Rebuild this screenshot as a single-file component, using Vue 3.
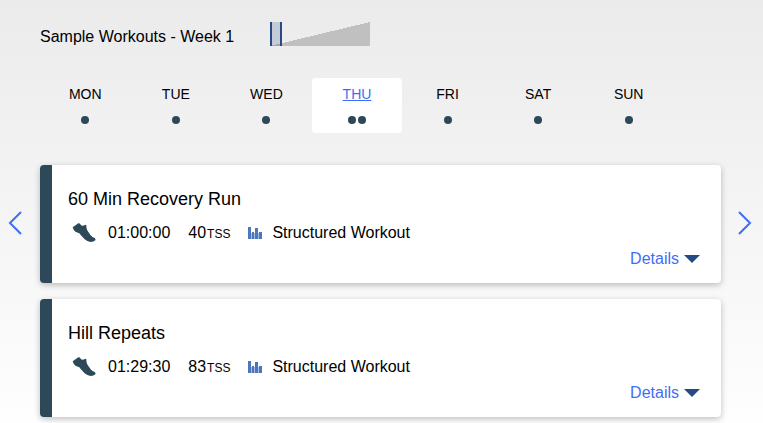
<script setup>
import { ref } from 'vue'

const week = ref(0)
const active = ref('THU')
const days = [
  { name: 'MON', count: 1 },
  { name: 'TUE', count: 1 },
  { name: 'WED', count: 1 },
  { name: 'THU', count: 2 },
  { name: 'FRI', count: 1 },
  { name: 'SAT', count: 1 },
  { name: 'SUN', count: 1 },
]
const workouts = [
  { title: '60 Min Recovery Run', time: '01:00:00', tss: 40 },
  { title: 'Hill Repeats', time: '01:29:30', tss: 83 },
]
</script>

<template>
  <main class="page">
    <header class="header">
      <label class="heading" for="week">Sample Workouts - Week 1</label>
      <input id="week" v-model="week" class="ramp" type="range" min="0" max="11" />
    </header>

    <nav class="days">
      <button
        v-for="day in days"
        :key="day.name"
        type="button"
        class="day"
        :class="{ active: day.name === active }"
        @click="active = day.name"
      >
        <span class="day-name">{{ day.name }}</span>
        <span class="dots"><i v-for="n in day.count" :key="n" class="dot"></i></span>
      </button>
    </nav>

    <button type="button" class="arrow" aria-label="Previous day">
      <svg width="16" height="26" viewBox="0 0 16 26"><path d="M13 2 2 13l11 11" /></svg>
    </button>

    <section class="cards">
      <article v-for="w in workouts" :key="w.title" class="card">
        <h2 class="title">{{ w.title }}</h2>
        <div class="stats">
          <svg class="shoe" width="24" height="20" viewBox="0 0 72 60">
            <path d="M2 13 L19 1 Q23 0 25 4 Q27 9 33 8 L41 5 Q44 6 43 10 Q43 18 47 24 L56 37 Q61 43 68 45 Q72 48 70 52 Q65 57 56 57 Q45 56 38 49 L26 36 Q24 30 18 29 Q9 27 5 20 Z" />
          </svg>
          <span class="time">{{ w.time }}</span>
          <span class="tss">{{ w.tss }}<small>TSS</small></span>
          <svg class="bars" width="14" height="12" viewBox="0 0 14 12">
            <path class="bars-back" d="M3 6h8v6H3z" />
            <path d="M0 0h3v12H0zM4 5h2v7H4zM7 1h3v11H7zM11 5h3v7h-3z" />
          </svg>
          <span>Structured Workout</span>
        </div>
        <button type="button" class="details">
          Details
          <svg width="16" height="8" viewBox="0 0 16 8"><path d="M0 0h16L8 8z" /></svg>
        </button>
      </article>
    </section>

    <button type="button" class="arrow" aria-label="Next day">
      <svg width="16" height="26" viewBox="0 0 16 26"><path d="M2 2l11 11L2 24" /></svg>
    </button>
  </main>
</template>

<style>
body {
  margin: 0;
  background: #fff;
}
</style>

<style scoped>
.page {
  display: grid;
  grid-template-columns: 40px 1fr 42px;
  padding: 22px 0 6px;
  background: linear-gradient(#ebebeb, #fefefe);
  font-family: "Liberation Sans", Arial, sans-serif;
  font-size: 16px;
  line-height: 20px;
  color: #000;
}
button {
  padding: 0;
  border: 0;
  background: none;
  font: inherit;
  color: inherit;
  cursor: pointer;
}
.header {
  grid-column: 2;
  display: flex;
  align-items: center;
  gap: 36px;
  height: 24px;
}
.heading {
  padding-top: 6px;
}
.ramp {
  appearance: none;
  width: 100px;
  height: 24px;
  margin: 0;
  background: linear-gradient(to bottom right, transparent 50%, #c0c0c0 50%);
}
.ramp::-webkit-slider-thumb {
  appearance: none;
  box-sizing: border-box;
  width: 12px;
  height: 24px;
  border: solid #264a86;
  border-width: 0 2px;
  background: rgba(38, 74, 134, 0.2);
}
.days {
  grid-column: 2;
  display: grid;
  grid-template-columns: repeat(7, 1fr);
  margin: 32px 47px 32px 0;
}
.day {
  display: flex;
  flex-direction: column;
  align-items: center;
  gap: 12px;
  height: 55px;
  padding-top: 6px;
  border-radius: 4px;
  font-size: 14px;
}
.active {
  background: #fff;
}
.active .day-name {
  color: #3f6ef6;
  text-decoration: underline;
}
.dots {
  display: flex;
  gap: 2px;
}
.dot {
  width: 8px;
  height: 8px;
  border-radius: 50%;
  background: #2d4858;
}
.arrow {
  grid-column: 1;
  align-self: start;
  margin-top: 45px;
  height: 26px;
}
.cards + .arrow {
  grid-column: 3;
  padding-left: 8px;
}
.arrow svg {
  display: block;
  margin-left: 8px;
  fill: none;
  stroke: #3f6ef6;
  stroke-width: 2;
}
.cards {
  display: grid;
  gap: 16px;
}
.card {
  display: flex;
  flex-direction: column;
  height: 118px;
  box-sizing: border-box;
  padding: 24px 21px 14px 16px;
  border-left: 12px solid #2d4858;
  border-radius: 4px;
  background: #fff;
  box-shadow: 0 2px 6px rgba(0, 0, 0, 0.25);
}
.title {
  margin: 0 0 14px;
  font-size: 18px;
  font-weight: 400;
}
.stats {
  display: flex;
  align-items: center;
  height: 20px;
}
.shoe {
  margin: 0 12px 0 4px;
  fill: #2d4858;
}
.time {
  margin-right: 18px;
}
.tss {
  display: flex;
  align-items: baseline;
  gap: 1px;
}
small {
  font-size: 12px;
}
.bars {
  margin: 0 10px 0 18px;
  fill: #4d76bd;
}
.bars-back {
  fill: #a9bde0;
}
.details {
  display: flex;
  align-items: center;
  align-self: flex-end;
  gap: 5px;
  margin-top: 6px;
  color: #3f6ef6;
}
.details svg {
  fill: #264a86;
}
</style>
